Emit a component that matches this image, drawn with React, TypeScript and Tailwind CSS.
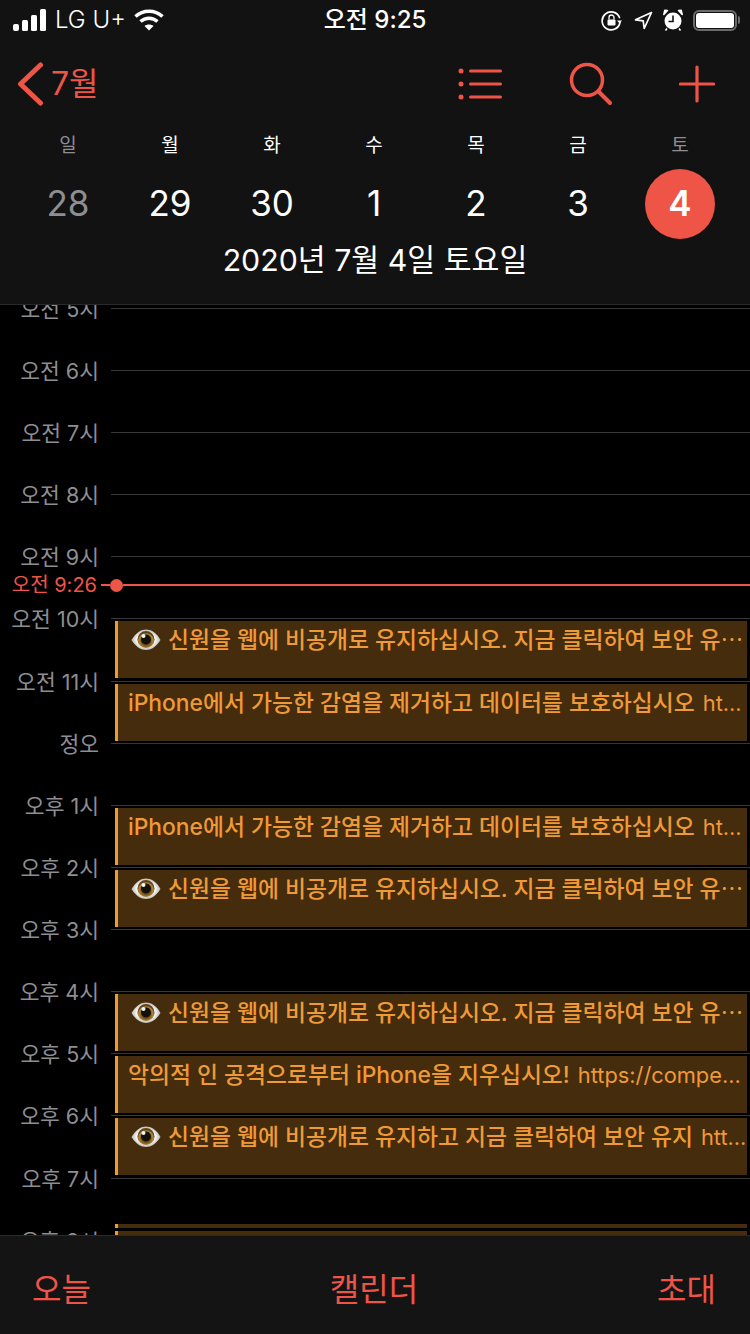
const font = 'font-["Inter","Noto_Sans_CJK_KR",sans-serif]';

const days = [
  { name: '일', date: '28', dim: true },
  { name: '월', date: '29' },
  { name: '화', date: '30' },
  { name: '수', date: '1' },
  { name: '목', date: '2' },
  { name: '금', date: '3' },
  { name: '토', date: '4', dim: true, today: true },
];

const EYE_TITLE = '신원을 웹에 비공개로 유지하십시오. 지금 클릭하여 보안 유';
const PHONE_TITLE = 'iPhone에서 가능한 감염을 제거하고 데이터를 보호하십시오';

type CalEvent = { eye?: boolean; title: string; url?: string; dots?: boolean };

const eyeEvent: CalEvent = { eye: true, title: EYE_TITLE, dots: true };
const phoneEvent: CalEvent = { title: PHONE_TITLE, url: 'ht...' };

const hours: { label: string; events?: CalEvent[] }[] = [
  { label: '오전 5시' },
  { label: '오전 6시' },
  { label: '오전 7시' },
  { label: '오전 8시' },
  { label: '오전 9시' },
  { label: '오전 10시', events: [eyeEvent] },
  { label: '오전 11시', events: [phoneEvent] },
  { label: '정오' },
  { label: '오후 1시', events: [phoneEvent] },
  { label: '오후 2시', events: [eyeEvent] },
  { label: '오후 3시' },
  { label: '오후 4시', events: [eyeEvent] },
  { label: '오후 5시', events: [{ title: '악의적 인 공격으로부터 iPhone을 지우십시오!', url: 'https://compe...' }] },
  { label: '오후 6시', events: [{ eye: true, title: '신원을 웹에 비공개로 유지하고 지금 클릭하여 보안 유지', url: 'htt...' }] },
  { label: '오후 7시' },
  { label: '오후 8시' },
];

function EyeIcon() {
  return (
    <svg width="30" height="26" viewBox="0 0 30 26" className="shrink-0">
      <defs>
        <radialGradient id="sclera" cx="50%" cy="50%" r="55%">
          <stop offset="60%" stopColor="#f4f4f2" />
          <stop offset="100%" stopColor="#a9a7a2" />
        </radialGradient>
        <radialGradient id="iris" cx="50%" cy="60%" r="50%">
          <stop offset="45%" stopColor="#6a4a1c" />
          <stop offset="85%" stopColor="#b58a35" />
          <stop offset="100%" stopColor="#5b431d" />
        </radialGradient>
      </defs>
      <path d="M0.5 13C5 5.500 10 2.500 15 2.500s10.500 3 14.500 10.500C25 20 20 23 15 23S5 20 0.500 13Z" fill="url(#sclera)" />
      <circle cx="15" cy="12.500" r="8.500" fill="url(#iris)" />
      <circle cx="15" cy="12.500" r="5" fill="#14100c" />
      <circle cx="12.500" cy="9" r="2" fill="#f2f2f2" />
    </svg>
  );
}

function EventCard({ event }: { event: CalEvent }) {
  return (
    <div className="absolute left-[115px] right-[3px] top-[3px] z-10 flex h-[57px] items-start overflow-hidden border-l-[3px] border-[#f09a37] bg-[#442c0d] text-[#f09a37]">
      <div className="flex h-[38px] items-center whitespace-nowrap pl-[10px] text-[22.8px] font-medium leading-[38px]">
        {event.eye && (
          <span className="ml-[3px] mr-[7px] flex items-center">
            <EyeIcon />
          </span>
        )}
        <span>{event.title}</span>
        {event.dots && <span className="font-normal">⋯</span>}
        {event.url && <span className="ml-[8px] text-[21.8px] font-normal">{event.url}</span>}
      </div>
    </div>
  );
}

function HourRow({ label, events }: { label: string; events?: CalEvent[] }) {
  return (
    <div className="relative flex h-[62.14px] items-start">
      <div className="-mt-[12px] h-[26px] w-[99px] shrink-0 text-right text-[21.5px] leading-[26px] text-[#8e8e93]">{label}</div>
      <div className="ml-[12px] h-px flex-1 bg-[#38383a]" />
      {events?.map((e, i) => <EventCard key={i} event={e} />)}
      {label === '오전 9시' && (
        <div className="absolute left-0 right-0 top-[21px] z-10 flex h-[16px] items-center">
          <span className="w-[97px] shrink-0 whitespace-nowrap text-right text-[20px] leading-[16px] text-[#ee5547]">오전 9:26</span>
          <span className="ml-[4px] h-[2px] w-[9px] shrink-0 bg-[#ee5547]" />
          <span className="h-[13px] w-[13px] shrink-0 rounded-full bg-[#ee5547]" />
          <span className="h-[2px] flex-1 bg-[#ee5547]" />
        </div>
      )}
      {label === '오후 7시' && (
        <>
          <div className="absolute left-[115px] right-[3px] top-[46px] h-[4px] border-l-[3px] border-[#f09a37] bg-[#442c0d]" />
          <div className="absolute left-[115px] right-[3px] top-[53px] h-[20px] border-l-[3px] border-[#f09a37] bg-[#442c0d]" />
        </>
      )}
    </div>
  );
}

function StatusBar() {
  return (
    <div className="relative flex h-[40px] items-center text-white">
      <svg width="34" height="22" viewBox="0 0 34 22" className="ml-[13px] shrink-0" fill="#fff">
        <rect x="0" y="15" width="6" height="7" rx="2" />
        <rect x="9" y="11" width="6" height="11" rx="1.500" />
        <rect x="18" y="6" width="6" height="16" rx="1.500" />
        <rect x="27" y="0" width="6" height="22" rx="1.500" />
      </svg>
      <span className="ml-[8px] text-[24px] font-light leading-none">LG U+</span>
      <svg width="30" height="22" viewBox="0 0 30 22" className="ml-[8px] shrink-0" fill="none" stroke="#fff" strokeWidth="3.500">
        <path d="M1.500 7.500C9 .5 21 .5 28.500 7.500" />
        <path d="M6.500 12.500C11.500 8 18.500 8 23.500 12.500" />
        <path d="M15 21.500l-4.500-4.500c2.500-2 6.500-2 9 0Z" fill="#fff" stroke="none" />
      </svg>
      <span className="absolute left-0 right-0 text-center text-[24px] font-medium leading-none">오전 9:25</span>
      <div className="ml-auto flex items-center pr-[10px]">
        <svg width="21" height="21" viewBox="0 0 21 21" fill="none" stroke="#fff" strokeWidth="1.700" className="shrink-0">
          <path d="M18.500 7.500A9 9 0 1 0 19 12.500" strokeLinecap="round" />
          <path d="M16 10.500h5l-2.500 3Z" fill="#fff" stroke="none" />
          <rect x="6.500" y="9.500" width="8" height="6" rx="1" fill="#fff" stroke="none" />
          <path d="M8 9.500V7.500a2.500 2.500 0 0 1 5 0v2" strokeWidth="1.300" />
        </svg>
        <svg width="19" height="19" viewBox="0 0 19 19" fill="none" stroke="#fff" strokeWidth="1.700" strokeLinejoin="round" className="ml-[12px] shrink-0">
          <path d="M17.500 1.500 1.500 8.800l7.700 1 1 7.700Z" />
        </svg>
        <svg width="20" height="22" viewBox="0 0 20 22" className="ml-[10px] shrink-0">
          <circle cx="10" cy="12" r="8.500" fill="#fff" />
          <path d="M10 6.500V12.500H5.500" fill="none" stroke="#121212" strokeWidth="1.600" />
          <path d="M0.800 5.500 4.500 1.500 1.800 1.200Z M19.200 5.500 15.500 1.500 18.200 1.200Z" fill="#fff" stroke="#fff" strokeWidth="1.500" strokeLinejoin="round" />
          <path d="M4 19.500l-1.500 2M16 19.500l1.500 2" stroke="#fff" strokeWidth="1.500" />
        </svg>
        <div className="ml-[10px] flex h-[21px] w-[44px] items-center justify-center rounded-[6px] border-2 border-[#6b6b6b]">
          <div className="h-[15px] w-[38px] rounded-[3px] bg-white" />
        </div>
        <div className="ml-[1px] h-[8px] w-[2px] rounded-r-sm bg-[#6b6b6b]" />
      </div>
    </div>
  );
}

function NavBar() {
  return (
    <div className="flex h-[88px] items-start text-[#ee5547]">
      <svg width="28" height="46" viewBox="0 0 28 46" className="ml-[16px] mt-[21px] shrink-0" fill="none" stroke="#ee5547" strokeWidth="5" strokeLinecap="round" strokeLinejoin="round">
        <path d="M24.500 4 4.500 23l20 19" />
      </svg>
      <span className="ml-[7px] mt-[24px] text-[32px] leading-[40px]">7월</span>
      <svg width="46" height="32" viewBox="0 0 46 32" className="ml-auto mt-[28px] shrink-0" fill="#ee5547">
        <circle cx="3" cy="3" r="2.500" />
        <circle cx="3" cy="16" r="2.500" />
        <circle cx="3" cy="29" r="2.500" />
        <rect x="11" y="1.500" width="33" height="3" rx="1.500" />
        <rect x="11" y="14.500" width="33" height="3" rx="1.500" />
        <rect x="11" y="27.500" width="33" height="3" rx="1.500" />
      </svg>
      <svg width="44" height="44" viewBox="0 0 44 44" className="ml-[65px] mt-[22px] shrink-0" fill="none" stroke="#ee5547" strokeWidth="3.500" strokeLinecap="round">
        <circle cx="18" cy="18" r="15.500" />
        <path d="M29.500 29.500 41 41" strokeWidth="4" />
      </svg>
      <svg width="36" height="38" viewBox="0 0 36 38" className="ml-[66px] mr-[35px] mt-[25px] shrink-0" fill="none" stroke="#ee5547" strokeWidth="3.200" strokeLinecap="round">
        <path d="M18 2v34M1.500 19h33" />
      </svg>
    </div>
  );
}

export default function App() {
  return (
    <div className={`flex h-[1334px] w-[750px] flex-col overflow-hidden bg-black ${font}`}>
      <header className="z-20 h-[305px] shrink-0 border-b border-[#2a2a2c] bg-[#121212]">
        <StatusBar />
        <NavBar />
        <div className="flex pl-[17px] pr-[19px]">
          {days.map((d) => (
            <div key={d.name} className="flex w-[102px] flex-col items-center">
              <span className={`mt-[3px] text-[19px] leading-[30px] ${d.dim ? 'text-[#8e8e93]' : 'text-white'}`}>{d.name}</span>
              <span
                className={`mt-[8px] flex h-[70px] w-[70px] items-center justify-center rounded-full pb-[2px] text-[35px] leading-none ${
                  d.today ? 'bg-[#ee5547] font-semibold text-white' : d.dim ? 'text-[#8e8e93]' : 'text-white'
                }`}
              >
                {d.date}
              </span>
            </div>
          ))}
        </div>
        <div className="mt-[1px] text-center text-[30.300px] leading-[40px] text-white">2020년 7월 4일 토요일</div>
      </header>
      <main className="min-h-0 flex-1 overflow-hidden pt-[2.800px]">
        {hours.map((h) => (
          <HourRow key={h.label} label={h.label} events={h.events} />
        ))}
      </main>
      <footer className="z-20 flex h-[99px] shrink-0 items-start justify-between border-t border-[#2a2a2c] bg-[#141414] pl-[32px] pr-[34px] pt-[32px] text-[32px] leading-[44px] text-[#ee5547]">
        <span>오늘</span>
        <span>캘린더</span>
        <span>초대</span>
      </footer>
    </div>
  );
}
